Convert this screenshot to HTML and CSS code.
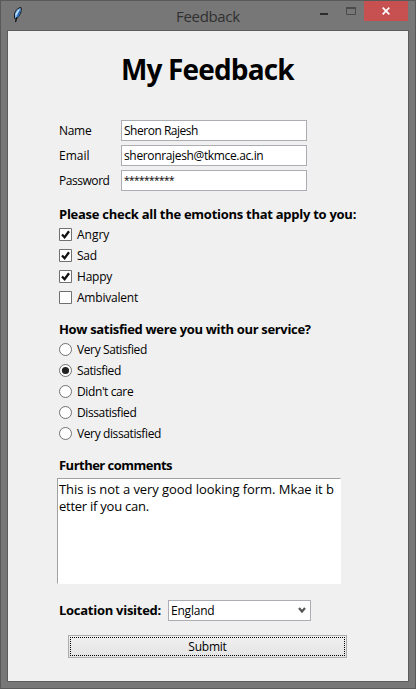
FILE: index.html
```html
<!DOCTYPE html>
<html lang="en">
<head>
<meta charset="utf-8">
<title>Feedback</title>
<link rel="stylesheet" href="styles.css">
</head>
<body>
<div class="window">
  <header class="titlebar">
    <svg class="feather" width="10" height="16" viewBox="0 0 10 16"><path d="M2 12C0 7 3 1 8 .5C9 4 7 9 3 12Z" fill="#79b5ef" stroke="#111" stroke-width="1"/><path d="M7.5 2C6 4 4 8 4 11L6.5 8Z" fill="#2463b0"/><path d="M6 3L2.5 8" stroke="#e5f5ff"/><path d="M4 10L2.5 15" stroke="#111" stroke-width="1.2"/></svg>
    <span class="caption">Feedback</span>
    <svg class="minimize" width="8" height="2"><path d="M0 0H8V2H0Z" fill="#2b2b2b"/></svg>
    <svg class="maximize" width="10" height="8"><path d="M.5 1H9.5V7.5H.5Z" fill="none" stroke="#4b4b4b"/><path d="M0 1H10" stroke="#4b4b4b" stroke-width="2"/></svg>
    <div class="close"><svg width="8" height="8"><path d="M.7.7L7.3 7.3M7.3.7L.7 7.3" stroke="#fff" stroke-width="1.7"/></svg></div>
  </header>
  <main class="client">
    <h1>My Feedback</h1>
    <div class="fields">
      <label class="name">Name</label><div class="entry sheron">Sheron Rajesh</div>
      <label>Email</label><div class="entry mail">sheronrajesh@tkmce.ac.in</div>
      <label class="password">Password</label><div class="entry stars">**********</div>
    </div>
    <h2 class="emotions">Please check all the emotions that apply to you:</h2>
    <div class="options">
      <div class="option"><svg width="13" height="13"><path d="M.5.5H12.5V12.5H.5Z" fill="#fff" stroke="#707070"/><path d="M3 6.5L5.6 9.3L10 3.3" fill="none" stroke="#111" stroke-width="2.3"/></svg><span>Angry</span></div>
      <div class="option"><svg width="13" height="13"><path d="M.5.5H12.5V12.5H.5Z" fill="#fff" stroke="#707070"/><path d="M3 6.5L5.6 9.3L10 3.3" fill="none" stroke="#111" stroke-width="2.3"/></svg><span class="t2">Sad</span></div>
      <div class="option"><svg width="13" height="13"><path d="M.5.5H12.5V12.5H.5Z" fill="#fff" stroke="#707070"/><path d="M3 6.5L5.6 9.3L10 3.3" fill="none" stroke="#111" stroke-width="2.3"/></svg><span class="t2">Happy</span></div>
      <div class="option"><svg width="13" height="13"><path d="M.5.5H12.5V12.5H.5Z" fill="#fff" stroke="#707070"/></svg><span class="t2">Ambivalent</span></div>
    </div>
    <h2 class="service">How satisfied were you with our service?</h2>
    <div class="options">
      <div class="option"><svg width="13" height="13"><circle cx="6.5" cy="6.5" r="6" fill="#fff" stroke="#707070"/></svg><span class="t3">Very Satisfied</span></div>
      <div class="option"><svg width="13" height="13"><circle cx="6.5" cy="6.5" r="6" fill="#fff" stroke="#707070"/><circle cx="6.5" cy="6.5" r="3.6" fill="#212121"/></svg><span class="t3">Satisfied</span></div>
      <div class="option"><svg width="13" height="13"><circle cx="6.5" cy="6.5" r="6" fill="#fff" stroke="#707070"/></svg><span class="t3">Didn't care</span></div>
      <div class="option"><svg width="13" height="13"><circle cx="6.5" cy="6.5" r="6" fill="#fff" stroke="#707070"/></svg><span class="t3">Dissatisfied</span></div>
      <div class="option"><svg width="13" height="13"><circle cx="6.5" cy="6.5" r="6" fill="#fff" stroke="#707070"/></svg><span class="t3">Very dissatisfied</span></div>
    </div>
    <h2 class="further">Further comments</h2>
    <div class="comments"><div>This is not a very good looking form. Mkae it b</div><div class="t2">etter if you can.</div></div>
    <div class="location">
      <h2>Location visited:</h2>
      <div class="combo"><span class="t2">England</span><svg width="8" height="7"><path d="M1 1L4 4.5L7 1" fill="none" stroke="#555" stroke-width="2.2"/></svg></div>
    </div>
    <div class="submit"><svg width="277" height="21"><path d="M1 1.5H276M1 19.5H276M1.5 3V19M275.5 3V19" fill="none" stroke="#000" stroke-dasharray="1 1"/></svg><span class="t2">Submit</span></div>
  </main>
</div>
</body>
</html>
```
FILE: styles.css
```css
* { box-sizing: border-box; }
body { margin: 0; font: 12px/21px "Open Sans", "Noto Sans", sans-serif; color: #000; }
svg { display: block; flex: none; }
.window { width: 416px; height: 689px; padding: 0 7px 7px; background: #777; border: 1px solid #595959; }
.titlebar { height: 29px; display: flex; align-items: flex-start; }
.feather { margin: 6px 0 0 5px; }
.caption { width: 63px; margin: 4px 0 0 153px; font-size: 15px; line-height: 22px; letter-spacing: -.32px; color: #303030; white-space: nowrap; }
.minimize { margin: 12px 0 0 81px; }
.maximize { margin: 6px 0 0 18px; }
.close { width: 45px; height: 20px; margin-left: 8px; background: #c75050; display: grid; place-items: center; }
.client { width: 402px; height: 652px; margin-left: -1px; padding: 0 0 0 51px; background: #f0f0f0; border: 1px solid #5c5c5c; }
h1 { margin: 0 0 0 62px; padding-top: 18px; height: 89px; font-size: 28px; line-height: 40px; letter-spacing: -.85px; white-space: nowrap; }
.fields { display: grid; grid-template-columns: 62px 186px; row-gap: 4px; }
.entry { height: 21px; padding-left: 2px; line-height: 19px; background: #fff; border: 1px solid #abadb3; }
.name { letter-spacing: -.3px; }
.password { letter-spacing: -.45px; }
.sheron { letter-spacing: -.48px; }
.mail { letter-spacing: -.35px; }
.stars { font-size: 10px; letter-spacing: -.51px; }
h2 { margin: 0; font-size: 13px; line-height: 20px; letter-spacing: -.27px; white-space: nowrap; }
.emotions { margin-top: 13px; letter-spacing: -.27px; }
.service { margin-top: 11px; letter-spacing: -.33px; }
.further { margin-top: 11px; letter-spacing: -.52px; }
.option { height: 21px; display: flex; align-items: center; gap: 5px; white-space: nowrap; }
.t2 { letter-spacing: -.22px; }
.t3 { letter-spacing: -.39px; }
.comments { width: 284px; height: 106px; margin: 3px 0 0 -2px; padding: 2px 0 0 1px; font-size: 13px; line-height: 17px; letter-spacing: -.06px; white-space: nowrap; background: #fff; border: 1px solid #a0a0a0; border-right-color: #fff; border-bottom-color: #fff; }
.comments .t2 { letter-spacing: -.25px; }
.location { display: flex; margin-top: 16px; }
.location h2 { width: 109px; }
.combo { width: 143px; height: 21px; padding: 0 4px 0 2px; display: flex; align-items: center; justify-content: space-between; background: #fff; border: 1px solid #abadb3; }
.submit { width: 279px; height: 23px; margin: 14px 0 0 9px; display: grid; grid-template-columns: 277px; place-items: center; background: linear-gradient(#f0f0f0, #e4e4e4); border: 1px solid #acacac; }
.submit > * { grid-area: 1 / 1; }
```
